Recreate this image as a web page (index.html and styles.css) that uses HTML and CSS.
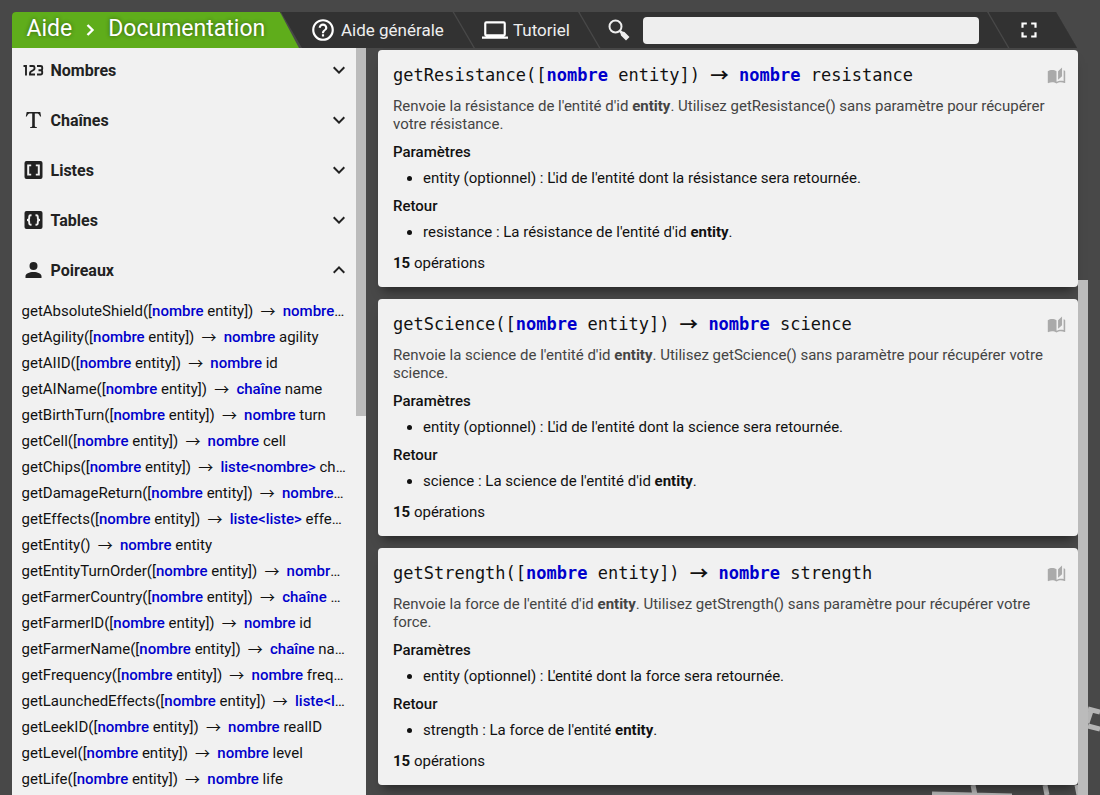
FILE: index.html
```html
<!DOCTYPE html>
<html lang="fr">
<head>
<meta charset="utf-8">
<title>Documentation</title>
<link rel="stylesheet" href="styles.css">
</head>
<body>
<svg class="sketch" viewBox="0 0 170 95" aria-hidden="true">
  <path d="M2 94L82 96M43 85l2 10M115 85l2 10M147 85l2 10M158 9l12 3M158 26l12 3M161 11l-4 12" />
</svg>
<div class="page">
  <header class="header">
    <h1 class="crumbs"><span>Aide</span><svg class="crumb-arrow" viewBox="0 0 24 24"><path d="M8 17.200l5.200-5.200L8 6.800 10 5l7 7-7 7z"/></svg><span>Documentation</span></h1>
    <div class="tabs">
      <a class="tab general"><svg class="icon" viewBox="0 0 24 24"><path d="M11 18h2v-2h-2v2m1-16A10 10 0 0 0 2 12a10 10 0 0 0 10 10 10 10 0 0 0 10-10A10 10 0 0 0 12 2m0 18c-4.410 0-8-3.590-8-8s3.590-8 8-8 8 3.590 8 8-3.590 8-8 8m0-14a4 4 0 0 0-4 4h2a2 2 0 0 1 2-2 2 2 0 0 1 2 2c0 2-3 1.750-3 5h2c0-2.250 3-2.500 3-5a4 4 0 0 0-4-4z"/></svg><span>Aide générale</span></a>
      <a class="tab tutorial"><svg class="icon" viewBox="0 0 24 24"><path d="M4 6h16v10H4m16 2a2 2 0 0 0 2-2V6a2 2 0 0 0-2-2H4a2 2 0 0 0-2 2v10a2 2 0 0 0 2 2H0v2h24v-2z"/></svg><span>Tutoriel</span></a>
      <div class="tab search"><svg class="loupe" viewBox="0 0 22 22"><circle cx="7.500" cy="7.500" r="6" fill="none" stroke="#eee" stroke-width="2"/><path d="M11 12.500l1.500-1.500 2 1.500 2 .5 5 5-3.500 3.500-5-5-.5-2z"/></svg><input class="field" type="text" aria-label="Recherche"></div>
      <a class="tab expand"><svg class="icon" viewBox="0 0 24 24"><path d="M5 5h5v2H7v3H5zm9 0h5v5h-2V7h-3zm3 9h2v5h-5v-2h3zm-7 3v2H5v-5h2v3z"/></svg></a>
    </div>
  </header>
  <div class="columns">
    <nav class="sidebar">
      <div class="categories">
        <h2 class="category"><svg class="cat-icon" viewBox="0 0 24 24"><path fill="none" stroke="#222" stroke-width="1.900" d="M2 8h2.500v9.500M8 8h3.500q1.500 0 1.500 1.500v1q0 1-1 1.500l-2.500 1.500q-1 .6-1 1.800v1.200H13.500M15.500 8h3.500q1.700 0 1.700 1.500v1.200q0 1.500-1.700 1.500H17h2q1.700 0 1.700 1.500v1.300q0 1.500-1.700 1.500h-3.500"/></svg><span>Nombres</span><svg class="chevron" viewBox="0 0 24 24"><path d="M7.400 8.600l4.600 4.600 4.600-4.600L18 10l-6 6-6-6z"/></svg></h2>
        <h2 class="category"><svg class="cat-icon" viewBox="0 0 24 24"><path d="M18.800 4l.8 4.400-1 .2c-.5-1.400-.9-2.200-1.600-2.600C16.500 5.600 15.700 5.500 15 5.500H13.300v12c0 .5 0 1 .3 1.200.4.3 1 .3 1.700.3v1H8.700v-1c.7 0 1.400 0 1.700-.3.300-.2.300-.7.300-1.200v-12H9c-.7 0-1.500.1-2.100.5-.6.400-1.100 1.200-1.600 2.600l-1-.2L5.200 4z"/></svg><span>Chaînes</span><svg class="chevron" viewBox="0 0 24 24"><path d="M7.400 8.600l4.600 4.600 4.600-4.600L18 10l-6 6-6-6z"/></svg></h2>
        <h2 class="category"><svg class="cat-icon" viewBox="0 0 24 24"><path fill-rule="evenodd" d="M5 3h14a2 2 0 0 1 2 2v14a2 2 0 0 1-2 2H5a2 2 0 0 1-2-2V5a2 2 0 0 1 2-2zm.7 3.500v11h4v-1.700H7.700V8.200h2V6.500zm8.600 0v1.700h2v7.600h-2v1.700h4v-11z"/></svg><span>Listes</span><svg class="chevron" viewBox="0 0 24 24"><path d="M7.400 8.600l4.600 4.600 4.600-4.600L18 10l-6 6-6-6z"/></svg></h2>
        <h2 class="category"><svg class="cat-icon" viewBox="0 0 24 24"><path d="M5 3h14a2 2 0 0 1 2 2v14a2 2 0 0 1-2 2H5a2 2 0 0 1-2-2V5a2 2 0 0 1 2-2z"/><path fill="none" stroke="#f1f1f1" stroke-width="1.900" d="M10 7.200H9.200q-1.500 0-1.500 1.500v1.600q0 1.700-2.200 1.700 2.200 0 2.200 1.700v1.600q0 1.500 1.500 1.500h.8M14 7.200h.8q1.500 0 1.500 1.500v1.600q0 1.700 2.200 1.700-2.200 0-2.200 1.700v1.600q0 1.500-1.500 1.500h-.8"/></svg><span>Tables</span><svg class="chevron" viewBox="0 0 24 24"><path d="M7.400 8.600l4.600 4.600 4.600-4.600L18 10l-6 6-6-6z"/></svg></h2>
        <h2 class="category"><svg class="cat-icon" viewBox="0 0 24 24"><path d="M12 4a4 4 0 1 1 0 8 4 4 0 0 1 0-8m0 10c4.400 0 8 1.800 8 4v2H4v-2c0-2.200 3.600-4 8-4z"/></svg><span>Poireaux</span><svg class="chevron" viewBox="0 0 24 24"><path d="M7.400 15.400L12 10.800l4.600 4.600L18 14l-6-6-6 6z"/></svg></h2>
      </div>
      <div class="functions">
        <a class="item">getAbsoluteShield([<b>nombre</b> entity])<i>→</i><b>nombre</b> absoluteShield</a>
        <a class="item">getAgility([<b>nombre</b> entity])<i>→</i><b>nombre</b> agility</a>
        <a class="item">getAIID([<b>nombre</b> entity])<i>→</i><b>nombre</b> id</a>
        <a class="item">getAIName([<b>nombre</b> entity])<i>→</i><b>chaîne</b> name</a>
        <a class="item">getBirthTurn([<b>nombre</b> entity])<i>→</i><b>nombre</b> turn</a>
        <a class="item">getCell([<b>nombre</b> entity])<i>→</i><b>nombre</b> cell</a>
        <a class="item">getChips([<b>nombre</b> entity])<i>→</i><b>liste&lt;nombre&gt;</b> chips</a>
        <a class="item">getDamageReturn([<b>nombre</b> entity])<i>→</i><b>nombre</b> damageReturn</a>
        <a class="item">getEffects([<b>nombre</b> entity])<i>→</i><b>liste&lt;liste&gt;</b> effects</a>
        <a class="item">getEntity()<i>→</i><b>nombre</b> entity</a>
        <a class="item">getEntityTurnOrder([<b>nombre</b> entity])<i>→</i><b>nombre</b> order</a>
        <a class="item">getFarmerCountry([<b>nombre</b> entity])<i>→</i><b>chaîne</b> country</a>
        <a class="item">getFarmerID([<b>nombre</b> entity])<i>→</i><b>nombre</b> id</a>
        <a class="item">getFarmerName([<b>nombre</b> entity])<i>→</i><b>chaîne</b> name</a>
        <a class="item">getFrequency([<b>nombre</b> entity])<i>→</i><b>nombre</b> frequency</a>
        <a class="item">getLaunchedEffects([<b>nombre</b> entity])<i>→</i><b>liste&lt;liste&gt;</b> effects</a>
        <a class="item">getLeekID([<b>nombre</b> entity])<i>→</i><b>nombre</b> realID</a>
        <a class="item">getLevel([<b>nombre</b> entity])<i>→</i><b>nombre</b> level</a>
        <a class="item">getLife([<b>nombre</b> entity])<i>→</i><b>nombre</b> life</a>
      </div>
      <div class="side-thumb"></div>
    </nav>
    <main class="docs">
      <article class="card">
        <h3 class="signature"><span>getResistance([<b>nombre</b> entity]) <i>→</i> <b>nombre</b> resistance</span><svg class="book" viewBox="0 0 24 24"><path d="M19 2l-5 4.500v11l5-4.500V2M6.500 5C4.600 5 2.500 5.400 1 6.500v14.700c0 .2.300.5.500.5.100 0 .2-.1.300-.1C3.100 21 5 20.500 6.500 20.500c1.900 0 4 .4 5.500 1.500 1.400-.9 3.800-1.500 5.500-1.500 1.600 0 3.300.3 4.700 1.100.1 0 .2 0 .3 0 .2 0 .5-.2.500-.4V6.500c-.6-.4-1.200-.8-2-1V19c-1.100-.3-2.300-.5-3.500-.5-1.700 0-4.100.6-5.500 1.500V6.500C10.500 5.400 8.500 5 6.500 5z"/></svg></h3>
        <p class="summary">Renvoie la résistance de l'entité d'id <b>entity</b>. Utilisez getResistance() sans paramètre pour récupérer votre résistance.</p>
        <h4 class="label">Paramètres</h4>
        <ul class="values"><li>entity (optionnel) : <span class="kern">L</span>'id de l'entité dont la résistance sera retournée.</li></ul>
        <h4 class="label">Retour</h4>
        <ul class="values"><li>resistance : La résistance de l'entité d'id <b>entity</b>.</li></ul>
        <p class="cost"><b>15</b> opérations</p>
      </article>
      <article class="card">
        <h3 class="signature"><span>getScience([<b>nombre</b> entity]) <i>→</i> <b>nombre</b> science</span><svg class="book" viewBox="0 0 24 24"><path d="M19 2l-5 4.500v11l5-4.500V2M6.500 5C4.600 5 2.500 5.400 1 6.500v14.700c0 .2.300.5.500.5.100 0 .2-.1.300-.1C3.100 21 5 20.500 6.500 20.500c1.900 0 4 .4 5.500 1.500 1.400-.9 3.800-1.500 5.500-1.500 1.600 0 3.300.3 4.700 1.100.1 0 .2 0 .3 0 .2 0 .5-.2.500-.4V6.500c-.6-.4-1.200-.8-2-1V19c-1.100-.3-2.300-.5-3.500-.5-1.700 0-4.100.6-5.500 1.500V6.500C10.500 5.400 8.500 5 6.500 5z"/></svg></h3>
        <p class="summary">Renvoie la science de l'entité d'id <b>entity</b>. Utilisez getScience() sans paramètre pour récupérer votre science.</p>
        <h4 class="label">Paramètres</h4>
        <ul class="values"><li>entity (optionnel) : <span class="kern">L</span>'id de l'entité dont la science sera retournée.</li></ul>
        <h4 class="label">Retour</h4>
        <ul class="values"><li>science : La science de l'entité d'id <b>entity</b>.</li></ul>
        <p class="cost"><b>15</b> opérations</p>
      </article>
      <article class="card">
        <h3 class="signature"><span>getStrength([<b>nombre</b> entity]) <i>→</i> <b>nombre</b> strength</span><svg class="book" viewBox="0 0 24 24"><path d="M19 2l-5 4.500v11l5-4.500V2M6.500 5C4.600 5 2.500 5.400 1 6.500v14.700c0 .2.300.5.500.5.100 0 .2-.1.300-.1C3.100 21 5 20.500 6.500 20.500c1.900 0 4 .4 5.500 1.500 1.400-.9 3.800-1.500 5.500-1.500 1.600 0 3.300.3 4.700 1.100.1 0 .2 0 .3 0 .2 0 .5-.2.500-.4V6.500c-.6-.4-1.200-.8-2-1V19c-1.100-.3-2.300-.5-3.500-.5-1.700 0-4.100.6-5.500 1.500V6.500C10.500 5.400 8.500 5 6.500 5z"/></svg></h3>
        <p class="summary">Renvoie la force de l'entité d'id <b>entity</b>. Utilisez getStrength() sans paramètre pour récupérer votre force.</p>
        <h4 class="label">Paramètres</h4>
        <ul class="values"><li>entity (optionnel) : <span class="kern">L</span>'entité dont la force sera retournée.</li></ul>
        <h4 class="label">Retour</h4>
        <ul class="values"><li>strength : La force de l'entité <b>entity</b>.</li></ul>
        <p class="cost"><b>15</b> opérations</p>
      </article>
    </main>
    <div class="main-thumb"></div>
  </div>
</div>
</body>
</html>
```
FILE: styles.css
```css
* { box-sizing: border-box; }
body { margin: 0; height: 795px; overflow: hidden; background: #484848; font: 15px/18px Roboto, sans-serif; color: #111; position: relative; }
h1, h2, h3, h4, p, ul { margin: 0; padding: 0; font-weight: 400; }
b { font-weight: 500; }
i { font-style: normal; }
.sketch { position: absolute; left: 930px; top: 700px; width: 170px; height: 95px; fill: none; stroke: #b5b5b5; stroke-width: 5; }
.page { position: relative; height: 795px; padding: 12px 12px 0; display: flex; flex-direction: column; }

.header { height: 36px; display: flex; width: 1066px; flex: none; background: #323232; border-top-left-radius: 4px; clip-path: polygon(0 0, 1044px 0, 1065px 100%, 0 100%); }
.crumbs { width: 289px; flex: none; height: 36px; padding: 0 0 3px 14.500px; display: flex; align-items: center; font-size: 23px; line-height: 33px; color: #fff; background: #5fad1b; text-shadow: 0 0 4px rgba(0,0,0,.45); clip-path: polygon(0 0, 268px 0, 287px 100%, 0 100%); border-top-left-radius: 4px; }
.crumb-arrow { width: 20px; height: 20px; margin: 3px 8px 0 8px; fill: #fff; }
.tabs { display: flex; flex: 1; margin-left: -20px; background: #484848; }
.tab { display: flex; align-items: center; height: 36px; color: #eee; font-size: 17px; background: #323232; clip-path: polygon(0 0, calc(100% - 21px) 0, 100% 100%, 21px 100%); }
.tab + .tab { margin-left: -19.500px; }
.icon { width: 26px; height: 26px; fill: #fff; margin-right: 5px; }
.general { width: 192.500px; padding-left: 29px; }
.tutorial { width: 145px; padding-left: 28px; }
.search { width: 428.500px; padding-left: 28px; }
.expand { width: 90px; padding-left: 27.500px; }
.loupe { width: 22px; height: 22px; fill: #eee; margin-right: 13px; }
.field { width: 336px; height: 27px; margin-top: 1px; border: 0; border-radius: 4px; background: #eee; }

.columns { display: flex; flex: 1; min-height: 0; }
.sidebar { width: 354px; flex: none; background: #f1f1f1; position: relative; overflow: hidden; }
.side-thumb { position: absolute; right: 0; top: 0; width: 10px; height: 368px; background: #bbb; }
.categories { width: 344px; padding: 10px 5px 0 9px; display: flex; flex-direction: column; gap: 26px; }
.category { height: 24px; display: flex; align-items: center; gap: 4.500px; font-size: 16px; font-weight: 700; line-height: 24px; color: #222; }
.category span { flex: 1; padding-top: 1px; }
.cat-icon { width: 25px; height: 24px; fill: #222; }
.chevron { width: 24px; height: 24px; fill: #222; }
.functions { width: 344px; padding: 16px 10px 0 9.500px; }
.item { display: block; height: 26px; line-height: 26px; white-space: nowrap; overflow: hidden; text-overflow: ellipsis; }
.item i { margin: 0 7.200px; font-family: "Noto Sans CJK JP", sans-serif; line-height: 0; vertical-align: -1px; }
.item b, .signature b { color: #00c; }

.docs { width: 700px; flex: none; margin-left: 12px; padding-top: 2px; display: flex; flex-direction: column; gap: 12px; }
.card { height: 237px; flex: none; padding: 15px; background: #f1f1f1; border-radius: 4px; box-shadow: 0 8px 10px -5px rgba(0,0,0,.5); }
.signature { height: 20px; display: flex; justify-content: space-between; font: 17px/20px "DejaVu Sans Mono", monospace; white-space: nowrap; }
.signature b, .signature i { font-weight: 700; }
.signature i { font-family: "Noto Sans CJK JP", sans-serif; font-size: 18.500px; line-height: 0; vertical-align: -1px; }
.book { width: 19px; height: 19px; margin: 1px -3px 0 0; fill: #aaa; }
.summary { margin-top: 12px; color: #444; }
.summary b, .values b, .cost b { font-weight: 700; }
.label { margin-top: 10px; font-weight: 500; }
.values { margin-top: 8px; padding-left: 30px; }
.kern { letter-spacing: -2.600px; }
.cost { margin-top: 13px; }
.main-thumb { width: 10px; margin-top: 232px; background: #bbb; flex: none; }
```
